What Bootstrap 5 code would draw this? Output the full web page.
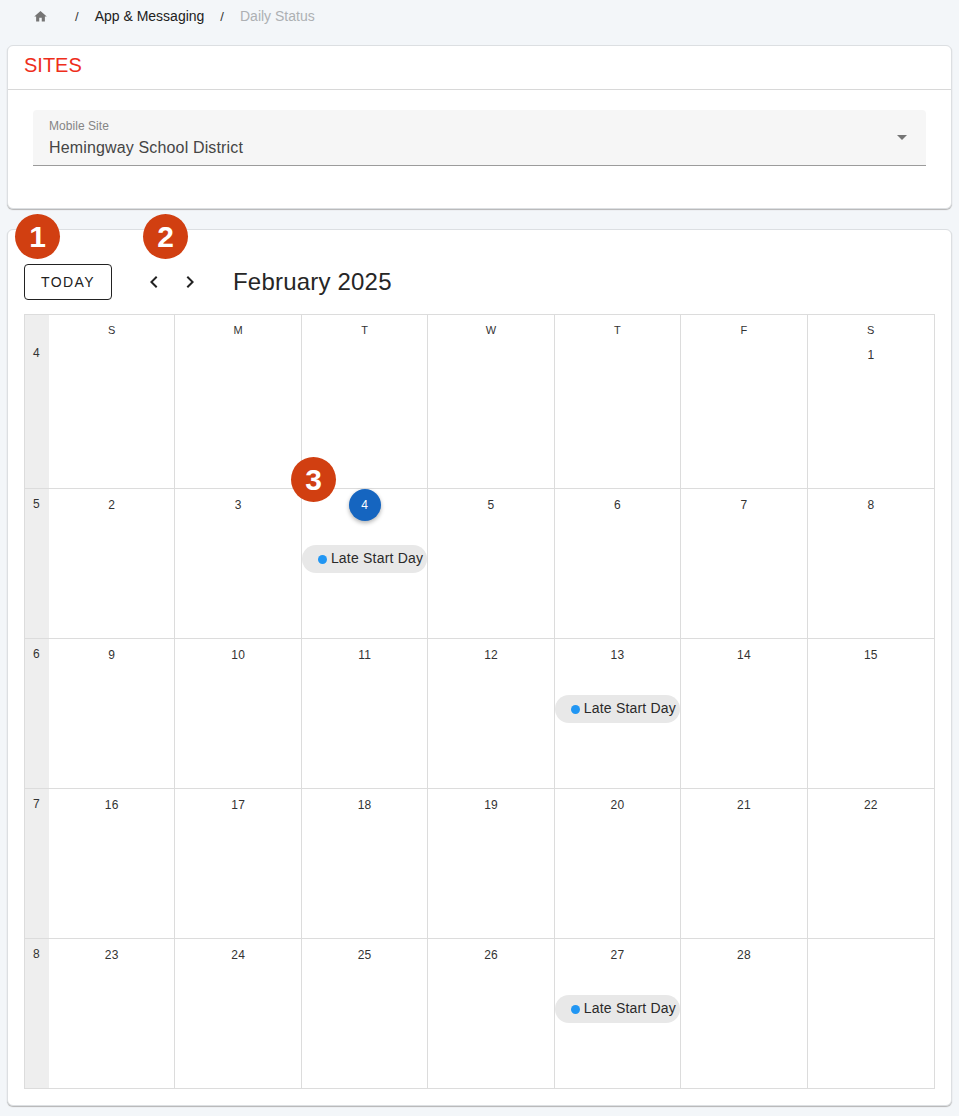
<!DOCTYPE html>
<html lang="en">
<head>
<meta charset="utf-8">
<title>Daily Status</title>
<link href="https://cdn.jsdelivr.net/npm/bootstrap@5.3.0/dist/css/bootstrap.min.css" rel="stylesheet">
<style>
html,body{height:1116px;overflow:hidden}
body{background:#f3f6f9;font-family:"Liberation Sans",Arial,sans-serif;color:#212121;font-size:14px}
.crumbs{height:33px;padding:0 0 0 33px;font-size:14px;margin-bottom:12px}
.crumbs svg{display:block;margin-right:27px}
.crumbs .sep{color:#333;font-size:13px}
.crumbs .cur{color:#adb0b3}
.panel{position:relative;margin:0 7px 20px 7px;background:#fff;border:1px solid #dcdfe2;border-radius:6px;box-shadow:0 1px 1px #b4b4b4}
.panel-head{height:44px;border-bottom:1px solid #d8d8d8;padding-left:16px;line-height:38px;color:#ee2e1b;font-size:20px}
.sel{margin:20px 25px 0 25px;height:56px;background:#f6f6f6;border-bottom:1px solid #9b9b9b;border-radius:4px 4px 0 0;padding:9px 16px 0 16px;position:relative}
.sel-lab{font-size:12px;line-height:14px;color:#858585;letter-spacing:.05px}
.sel-val{font-size:16px;line-height:24px;color:#454545;letter-spacing:.15px;margin-top:3px}
.sel-arrow{position:absolute;right:19px;top:25px;width:0;height:0;border-left:5px solid transparent;border-right:5px solid transparent;border-top:5px solid #757575}
.sites{height:164px}
.cal{height:877px;margin-bottom:0;padding:34px 16px 0 16px}
.tools{height:36px;margin-bottom:14px}
.today{width:88px;height:36px;padding:0;border:1px solid #222;border-radius:4px;background:#fff;color:#212121;font-size:14px;font-weight:400;letter-spacing:1.4px;margin-right:24px}
.navb{width:36px;height:36px;padding:0;border:0;background:none;display:flex;align-items:center;justify-content:center}
.mon{font-size:24px;color:#262626;margin-left:25px;line-height:36px;letter-spacing:.2px}
.mgrid{display:grid;grid-template-columns:24px repeat(6,126.45px) 1fr;grid-template-rows:174px repeat(4,150px);width:911px;border:solid #dcdcdc;border-width:1px 0 0 1px}
.wk{background:#eee;font-size:12px;color:#333;padding-left:8px;border-bottom:1px solid #dcdcdc;line-height:14px;padding-top:8px}
.wk.first{padding-top:31px}
.dc{border-right:1px solid #dcdcdc;border-bottom:1px solid #dcdcdc;text-align:center;font-size:12px;color:#333;min-width:0;position:relative;padding-top:8px;line-height:16px;letter-spacing:.2px}
.dn{font-size:11px;line-height:14px;height:16px;margin-bottom:8px;margin-top:0;color:#333}
.today-num{display:block;width:32px;height:32px;line-height:32px;border-radius:50%;background:#1565c0;color:#fff;margin:-8px auto 0;font-size:12px;box-shadow:0 2px 4px rgba(0,0,0,.3)}
.chip{display:flex;align-items:center;height:28px;margin:32px 0 0 0;border-radius:14px;background:#e8e8e8;padding:0 0 2px 16px;font-size:14px;color:#2a2a2a;white-space:nowrap;letter-spacing:.2px;line-height:26px}
.chip.aft{margin-top:24px}
.dot{width:9px;height:9px;border-radius:50%;background:#2196f3;margin:2px 4px 0 0;flex:none}
.pin{position:absolute;width:45px;height:45px;border-radius:50%;background:#d13f11;color:#fff;font-weight:700;font-size:30px;line-height:45px;text-align:center;font-family:"Liberation Sans",sans-serif;z-index:3}
.p1{left:15px;top:214px}.p2{left:143px;top:214px}.p3{left:291px;top:457px}
</style>
</head>
<body>
<nav class="crumbs d-flex align-items-center">
<svg width="15" height="15" viewBox="0 0 24 24" fill="#757575"><path d="M10 20v-6h4v6h5v-8h3L12 3 2 12h3v8z"/></svg>
<span class="sep">/</span><span class="ms-3 me-3">App &amp; Messaging</span><span class="sep">/</span><span class="cur ms-3">Daily Status</span>
</nav>
<div class="panel sites">
<div class="panel-head">SITES</div>
<div class="sel"><div class="sel-lab">Mobile Site</div><div class="sel-val">Hemingway School District</div><span class="sel-arrow"></span></div>
</div>
<div class="panel cal">
<div class="tools d-flex align-items-center">
<button class="today" type="button">TODAY</button>
<button class="navb" type="button"><svg width="24" height="24" viewBox="0 0 24 24" fill="#222"><path d="M15.41 7.41 14 6l-6 6 6 6 1.41-1.41L10.83 12z"/></svg></button>
<button class="navb" type="button"><svg width="24" height="24" viewBox="0 0 24 24" fill="#222"><path d="M10 6 8.59 7.41 13.17 12l-4.58 4.59L10 18l6-6z"/></svg></button>
<span class="mon">February 2025</span>
</div>
<div class="mgrid">
<div class="wk first">4</div>
<div class="dc"><div class="dn">S</div></div><div class="dc"><div class="dn">M</div></div><div class="dc"><div class="dn">T</div></div><div class="dc"><div class="dn">W</div></div><div class="dc"><div class="dn">T</div></div><div class="dc"><div class="dn">F</div></div><div class="dc"><div class="dn">S</div>1</div>
<div class="wk">5</div>
<div class="dc">2</div><div class="dc">3</div><div class="dc"><span class="today-num">4</span><div class="chip aft"><span class="dot"></span>Late Start Day</div></div><div class="dc">5</div><div class="dc">6</div><div class="dc">7</div><div class="dc">8</div>
<div class="wk">6</div>
<div class="dc">9</div><div class="dc">10</div><div class="dc">11</div><div class="dc">12</div><div class="dc">13<div class="chip"><span class="dot"></span>Late Start Day</div></div><div class="dc">14</div><div class="dc">15</div>
<div class="wk">7</div>
<div class="dc">16</div><div class="dc">17</div><div class="dc">18</div><div class="dc">19</div><div class="dc">20</div><div class="dc">21</div><div class="dc">22</div>
<div class="wk">8</div>
<div class="dc">23</div><div class="dc">24</div><div class="dc">25</div><div class="dc">26</div><div class="dc">27<div class="chip"><span class="dot"></span>Late Start Day</div></div><div class="dc">28</div><div class="dc"></div>
</div>
</div>
<div class="pin p1">1</div><div class="pin p2">2</div><div class="pin p3">3</div>
<script src="https://cdn.jsdelivr.net/npm/bootstrap@5.3.0/dist/js/bootstrap.bundle.min.js"></script>
</body>
</html>
